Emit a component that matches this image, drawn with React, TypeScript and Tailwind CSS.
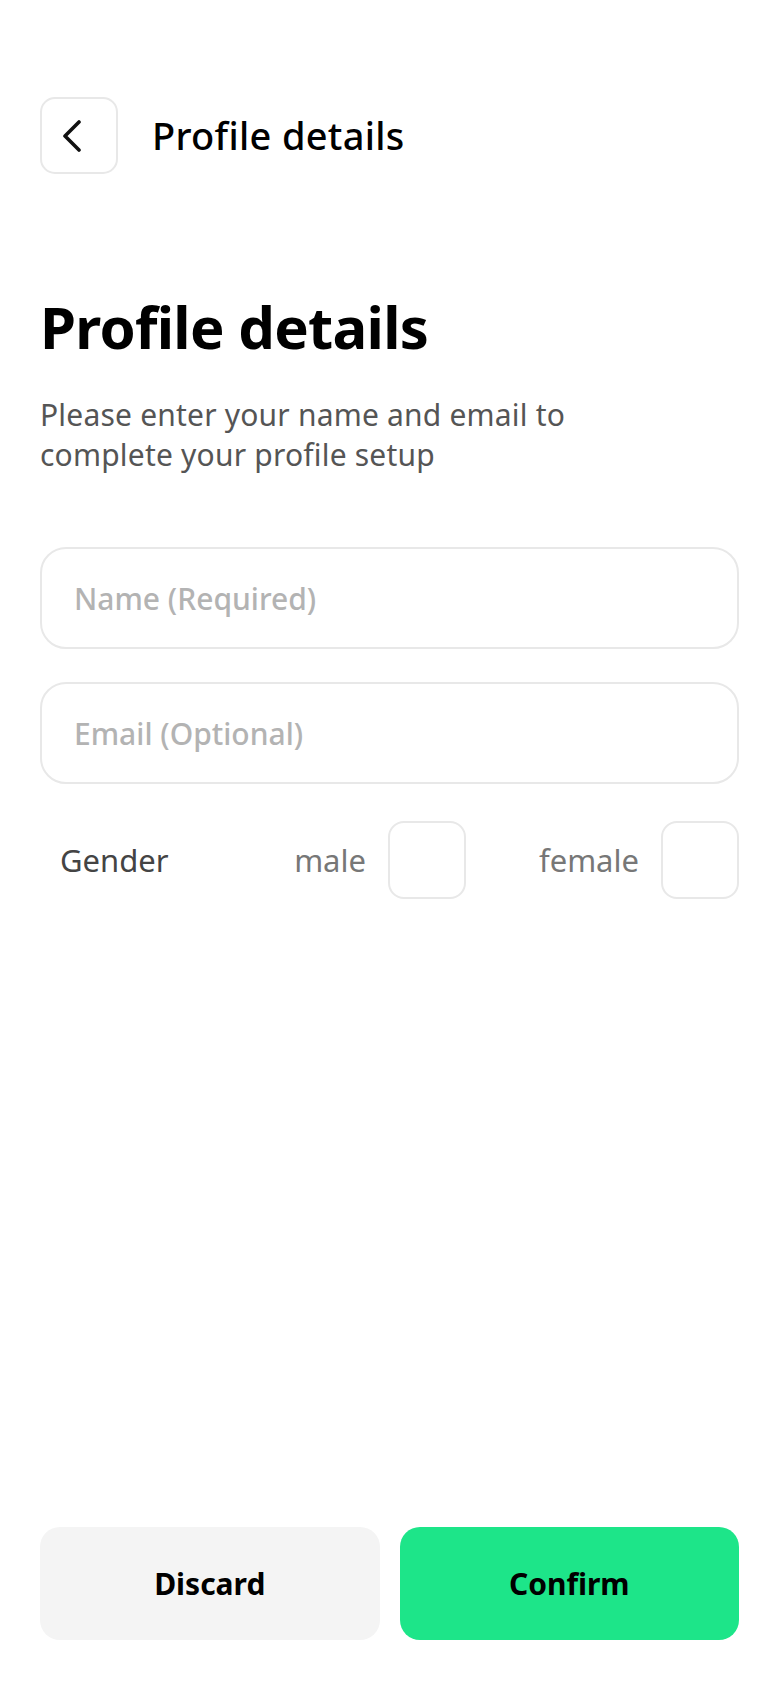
import React from 'react';

const ChevronLeft = () => (
  <svg width="20" height="32" viewBox="0 0 20 32" fill="none">
    <polyline
      points="17,2 3,16 17,30"
      stroke="#111"
      strokeWidth="3.6"
      strokeLinecap="round"
      strokeLinejoin="round"
    />
  </svg>
);

const GenderOption = ({ label }: { label: string }) => (
  <label className="flex items-center gap-[22px]">
    <span className="text-[31px] text-[#777]">{label}</span>
    <span className="w-[78px] h-[78px] rounded-[16px] border-2 border-[#e8e8e8] bg-white" />
  </label>
);

const App = () => {
  return (
    <div className="w-full h-[1688px] bg-white flex flex-col pl-10 pr-[41px] pt-[97px] pb-[48px] font-['Noto_Sans',sans-serif] text-black">
      {/* Top bar */}
      <div className="flex items-center gap-[34px]">
        <button className="w-[78px] h-[77px] rounded-[15px] border-2 border-[#e8e8e8] flex items-center pl-[20px]">
          <ChevronLeft />
        </button>
        <h1 className="text-[38px] font-medium tracking-[0.3px]">Profile details</h1>
      </div>

      {/* Heading */}
      <h2 className="mt-[123px] text-[58px] leading-[60px] font-bold tracking-[-0.7px]">Profile details</h2>
      <p className="mt-[38px] text-[30px] leading-[40px] text-[#555] max-w-[600px] tracking-[0.2px]">
        Please enter your name and email to complete your profile setup
      </p>

      {/* Fields */}
      <div className="mt-[72px] flex flex-col gap-[33px]">
        <input
          className="h-[102px] rounded-[26px] border-2 border-[#e8e8e8] px-[32px] text-[30px] font-medium outline-none placeholder:text-[#b3b3b3]"
          placeholder="Name (Required)"
        />
        <input
          className="h-[102px] rounded-[26px] border-2 border-[#e8e8e8] px-[32px] text-[30px] font-medium outline-none placeholder:text-[#b3b3b3]"
          placeholder="Email (Optional)"
        />
      </div>

      {/* Gender */}
      <div className="mt-[37px] flex items-center">
        <span className="flex-1 pl-[20px] text-[31px] text-[#444]">Gender</span>
        <div className="flex items-center gap-[73px]">
          <GenderOption label="male" />
          <GenderOption label="female" />
        </div>
      </div>

      {/* Actions */}
      <div className="mt-auto grid grid-cols-2 gap-[20px]">
        <button className="h-[113px] rounded-[20px] bg-[#f4f4f4] text-[30px] font-bold">Discard</button>
        <button className="h-[113px] rounded-[20px] bg-[#1de589] text-[30px] font-bold">Confirm</button>
      </div>
    </div>
  );
};

export default App;
